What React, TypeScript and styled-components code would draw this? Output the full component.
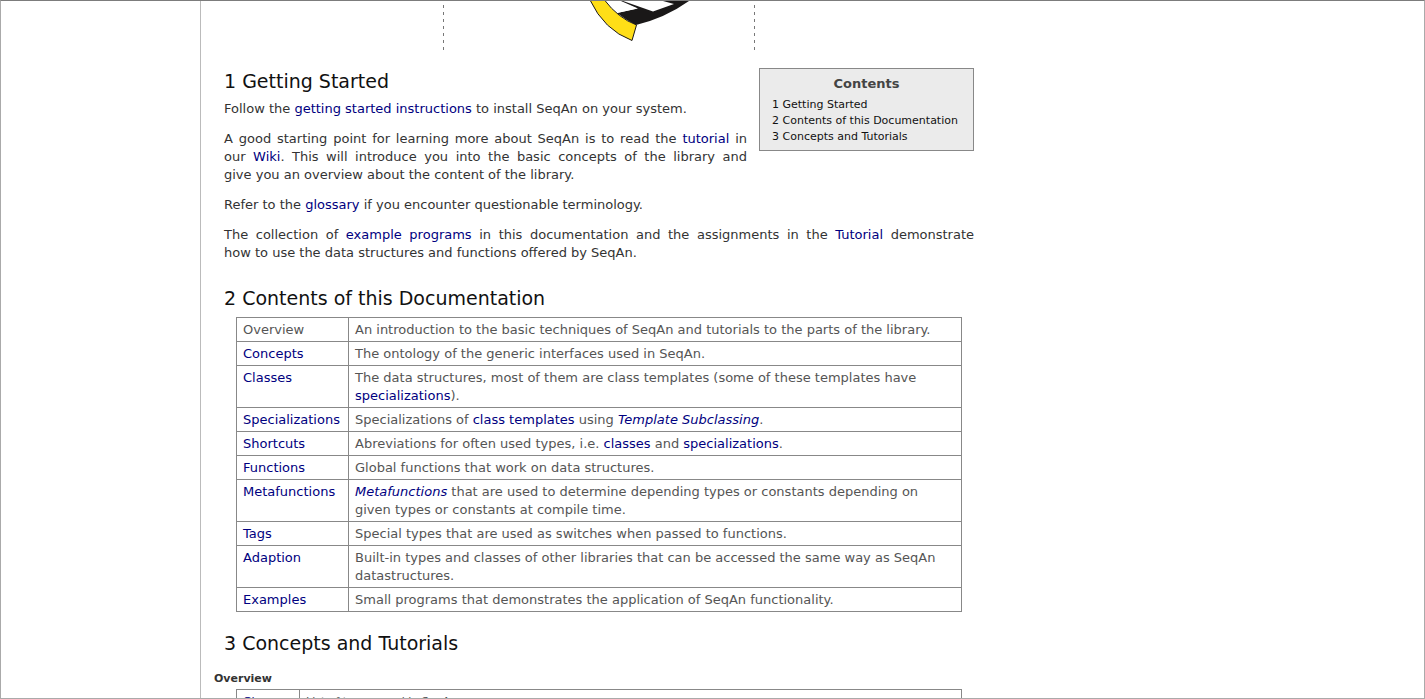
import React from "react";
import styled, { createGlobalStyle } from "styled-components";

const GlobalStyle = createGlobalStyle`
  * { box-sizing: border-box; }
  body {
    margin: 0;
    background: #fff;
    font-family: Verdana, "DejaVu Sans", sans-serif;
    font-size: 13px;
    line-height: 18px;
    color: #333;
  }
`;

const Frame = styled.div`
  display: flex;
  height: 100vh;
  overflow: hidden;
  border: 1px solid #aaa;
  border-top-color: #7c7c7c;
`;

const Sidebar = styled.aside`
  flex: 0 0 199px;
`;

const Main = styled.main`
  flex: 1;
  border-left: 1px solid #bbb;
  padding: 0 23px;
`;

const Article = styled.article`
  max-width: 750px;
`;

const LogoPanel = styled.div`
  width: 312px;
  height: 49px;
  margin: 0 auto 18px;
  display: flex;
  justify-content: center;
  background:
    repeating-linear-gradient(transparent 0 4px, #777 4px 7px) left / 1px 100% no-repeat,
    repeating-linear-gradient(transparent 0 4px, #777 4px 7px) right / 1px 100% no-repeat;
`;

const Contents = styled.nav`
  float: right;
  width: 215px;
  margin-left: 12px;
  padding: 6px 12px 5px;
  border: 1px solid #888;
  background: #ebebeb;
  font-size: 11px;
  line-height: 16px;
`;

const ContentsTitle = styled.h2`
  margin: 0 0 4px;
  text-align: center;
  font-size: 13px;
  line-height: 18px;
  color: #444;
`;

const ContentsLink = styled.a`
  display: block;
  white-space: nowrap;
  color: #111;
  text-decoration: none;
`;

const Heading = styled.h1`
  margin: 0 0 6px;
  font-size: 19px;
  line-height: 26px;
  font-weight: 400;
  color: #111;
`;

const Section = styled.section`
  & + & { padding-top: 11px; }
`;

const Paragraph = styled.p`
  margin: 0 0 12px;
  text-align: justify;
`;

const Link = styled.a`
  color: #000080;
  text-decoration: none;
`;

const Subheading = styled.h2`
  margin: 15px 0 2px -10px;
  font-size: 11px;
  line-height: 16px;
`;

const Table = styled.table<{ $small?: boolean }>`
  width: calc(100% - 24px);
  margin: 0 12px 7px;
  border-collapse: collapse;
  color: #555;
  ${(p) => (p.$small ? "font-size: 11px; line-height: 18px;" : "")}
`;

const Cell = styled.td<{ $width?: number }>`
  ${(p) => (p.$width ? `width: ${p.$width}px;` : "")}
  padding: 3px 6px 2px;
  border: 1px solid #888;
  vertical-align: top;
`;

const L = ({ children }: { children: React.ReactNode }) => <Link href="#">{children}</Link>;

const rows: [React.ReactNode, React.ReactNode][] = [
  ["Overview", "An introduction to the basic techniques of SeqAn and tutorials to the parts of the library."],
  [<L>Concepts</L>, "The ontology of the generic interfaces used in SeqAn."],
  [<L>Classes</L>, <>The data structures, most of them are class templates (some of these templates have <L>specializations</L>).</>],
  [<L>Specializations</L>, <>Specializations of <L>class templates</L> using <L><em>Template Subclassing</em></L>.</>],
  [<L>Shortcuts</L>, <>Abreviations for often used types, i.e. <L>classes</L> and <L>specializations</L>.</>],
  [<L>Functions</L>, "Global functions that work on data structures."],
  [<L>Metafunctions</L>, <><L><em>Metafunctions</em></L> that are used to determine depending types or constants depending on given types or constants at compile time.</>],
  [<L>Tags</L>, "Special types that are used as switches when passed to functions."],
  [<L>Adaption</L>, "Built-in types and classes of other libraries that can be accessed the same way as SeqAn datastructures."],
  [<L>Examples</L>, "Small programs that demonstrates the application of SeqAn functionality."],
];

const Logo = () => (
  <svg width="200" height="44" viewBox="499 1 200 44" aria-label="SeqAn logo">
    <path d="M590 1H689Q665 18 636 25Q626 20 617 13L637 8.500L619 1Z" fill="#1a1818" />
    <path d="M605 1H621L638 8.500L617 13Q610 8 605 1Z" fill="#fff" />
    <path d="M623 1H663L674 4L653 11.500Z" fill="#fff" />
    <path d="M590.500 1H605Q618 18 636.500 25L632 40.500Q605 30 590.500 1Z" fill="#ffde17" />
    <path d="M590 0Q604 30 632 40.500L636.500 25Q618 18 604.500 0" fill="none" stroke="#1a1818" />
  </svg>
);

export default function App() {
  return (
    <>
      <GlobalStyle />
      <Frame>
        <Sidebar />
        <Main>
          <Article>
            <LogoPanel><Logo /></LogoPanel>
            <Contents aria-label="Contents">
              <ContentsTitle>Contents</ContentsTitle>
              <ContentsLink href="#start">1 Getting Started</ContentsLink>
              <ContentsLink href="#contents">2 Contents of this Documentation</ContentsLink>
              <ContentsLink href="#concepts">3 Concepts and Tutorials</ContentsLink>
            </Contents>
            <Section id="start">
              <Heading>1 Getting Started</Heading>
              <Paragraph>Follow the <L>getting started instructions</L> to install SeqAn on your system.</Paragraph>
              <Paragraph>
                A good starting point for learning more about SeqAn is to read the <L>tutorial</L> in our <L>Wiki</L>. This
                will introduce you into the basic concepts of the library and give&nbsp;you an overview about the content of the
                library.
              </Paragraph>
              <Paragraph>Refer to the <L>glossary</L> if you encounter questionable terminology.</Paragraph>
              <Paragraph>
                The collection of <L>example programs</L> in this documentation and the assignments in
                the <L>Tutorial</L> demonstrate how&nbsp;to&nbsp;use the data structures and functions offered by SeqAn.
              </Paragraph>
            </Section>
            <Section id="contents">
              <Heading>2 Contents of this Documentation</Heading>
              <Table>
                <tbody>
                  {rows.map(([name, text], i) => (
                    <tr key={i}>
                      <Cell $width={112}>{name}</Cell>
                      <Cell>{text}</Cell>
                    </tr>
                  ))}
                </tbody>
              </Table>
            </Section>
            <Section id="concepts">
              <Heading>3 Concepts and Tutorials</Heading>
              <Subheading>Overview</Subheading>
              <Table $small>
                <tbody>
                  <tr>
                    <Cell $width={63}><L>Glossary</L></Cell>
                    <Cell>List of terms used in SeqAn.</Cell>
                  </tr>
                </tbody>
              </Table>
            </Section>
          </Article>
        </Main>
      </Frame>
    </>
  );
}
